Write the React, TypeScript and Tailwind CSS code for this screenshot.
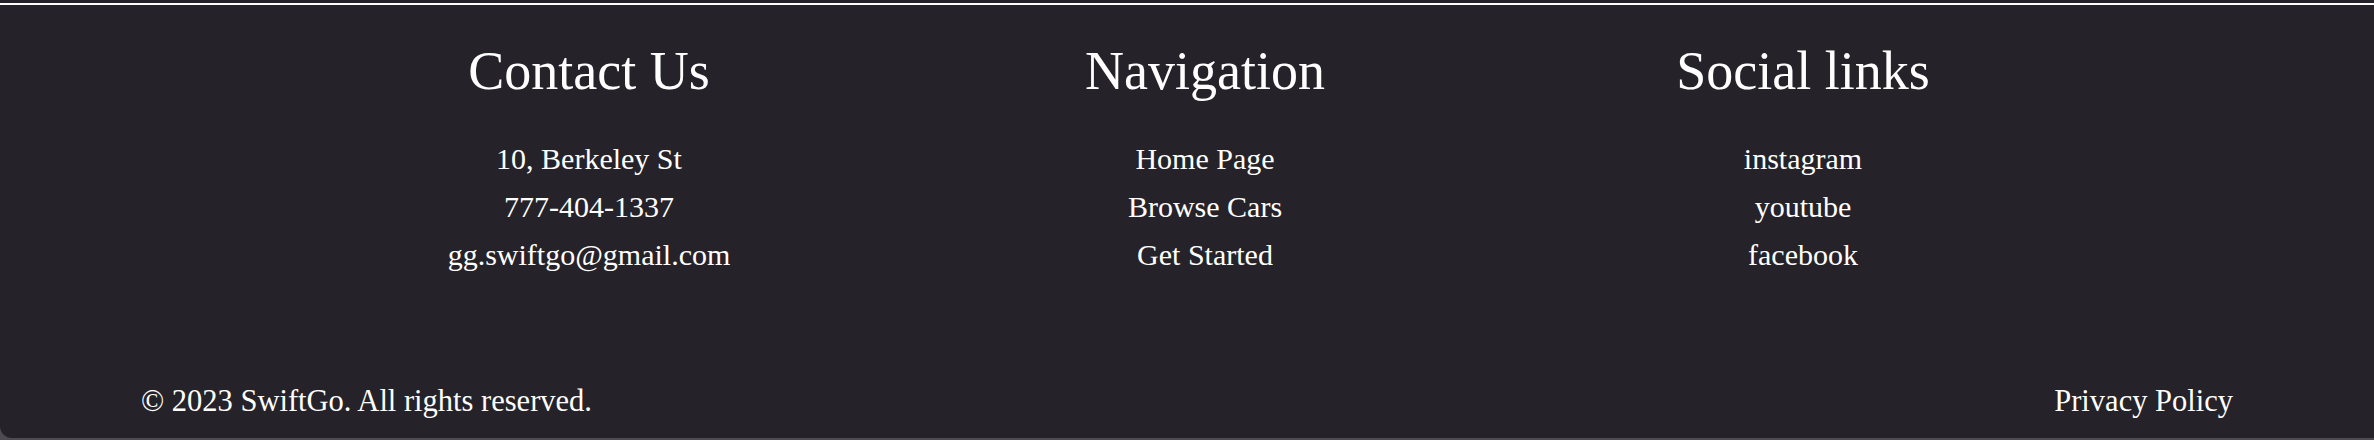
import React from 'react';

const columns = [
  { title: 'Contact Us', items: ['10, Berkeley St', '777-404-1337', 'gg.swiftgo@gmail.com'], width: 'w-[616px]' },
  { title: 'Navigation', items: ['Home Page', 'Browse Cars', 'Get Started'], width: 'w-[616px]' },
  { title: 'Social links', items: ['instagram', 'youtube', 'facebook'], width: 'w-[580px]' },
];

const App = () => {
  return (
    <div className="w-full h-[440px] flex flex-col bg-[#4d4c50]" style={{ fontFamily: '"Liberation Serif", "DejaVu Serif", serif' }}>
      <footer className="flex-1 mb-[2px] flex flex-col bg-[#252329] text-white rounded-bl-[12px]">
        <div className="h-[3px]" />
        <div className="h-[2px] bg-white" />
        <div className="flex pl-[281px] pt-[39px]">
          {columns.map((col) => (
            <div key={col.title} className={`${col.width} flex flex-col items-center`}>
              <h3 className="text-[54px] leading-none font-normal">{col.title}</h3>
              <ul className="mt-[37px] flex flex-col items-center">
                {col.items.map((item) => (
                  <li key={item}>
                    <a href="#" className="text-[30px] leading-[48px] hover:underline">
                      {item}
                    </a>
                  </li>
                ))}
              </ul>
            </div>
          ))}
        </div>
        <div className="mt-[100px] flex justify-between px-[141px]">
          <p className="text-[30.5px] leading-[45px]">© 2023 SwiftGo. All rights reserved.</p>
          <a href="#" className="text-[30.5px] leading-[45px]">Privacy Policy</a>
        </div>
      </footer>
    </div>
  );
};

export default App;
